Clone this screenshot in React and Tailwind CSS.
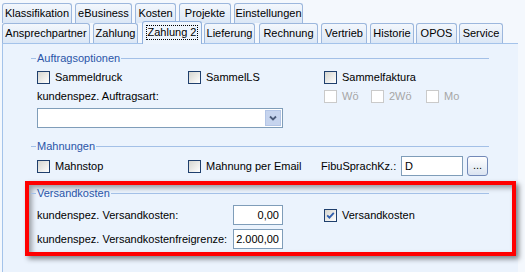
import React from 'react';

const row1 = [
  { label: 'Klassifikation', cls: 'w-[70px]' },
  { label: 'eBusiness', cls: 'w-[57px] ml-[3px]' },
  { label: 'Kosten', cls: 'w-[41px] ml-[3px]' },
  { label: 'Projekte', cls: 'w-[52px] ml-[3px]' },
  { label: 'Einstellungen', cls: 'w-[69px] ml-[3px]' },
];

const row2 = [
  { label: 'Ansprechpartner', cls: 'w-[88px]' },
  { label: 'Zahlung', cls: 'w-[45px] ml-[3px]' },
  { label: 'Zahlung 2', cls: 'w-[60px] ml-[4px]', selected: true },
  { label: 'Lieferung', cls: 'w-[51px] ml-[2px]' },
  { label: 'Rechnung', cls: 'w-[59px] ml-[4px]' },
  { label: 'Vertrieb', cls: 'w-[46px] ml-[3px]' },
  { label: 'Historie', cls: 'w-[44px] ml-[3px]' },
  { label: 'OPOS', cls: 'w-[41px] ml-[2px]' },
  { label: 'Service', cls: 'w-[44px] ml-[2px]' },
];

const Tab = ({ label, cls, selected }) => {
  if (selected) {
    return (
      <div className={`${cls} relative z-10 h-[23px] -mb-px flex items-start justify-center pt-[3px] border border-b-0 border-[#91b0db] rounded-t-[3px] bg-[#eef5fd]`}>
        <span className="border border-dotted border-black px-px leading-[13px]">{label}</span>
      </div>
    );
  }
  return (
    <div className={`${cls} h-[20px] flex items-center justify-center border border-b-0 border-[#9cb7dd] rounded-t-[3px] bg-linear-to-b from-[#f3f7fc] to-[#dbe7f6]`}>
      {label}
    </div>
  );
};

const Check = ({ checked, disabled }) => (
  <span
    className={`w-[13px] h-[13px] shrink-0 border flex items-center justify-center ${
      disabled ? 'border-[#cacaca] bg-white' : 'border-[#1f3f6d] bg-linear-to-br from-[#d5d5cf] to-white'
    }`}
  >
    {checked && (
      <svg width="9" height="9" viewBox="0 0 9 9">
        <polyline points="1.2,4.3 3.4,6.6 7.8,1.8" fill="none" stroke="#2f5eae" strokeWidth="1.8" />
      </svg>
    )}
  </span>
);

const CheckItem = ({ label, checked, disabled, cls = '' }) => (
  <div className={`flex items-center gap-[5px] ${cls}`}>
    <Check checked={checked} disabled={disabled} />
    <span className={disabled ? 'text-[#a6a6a6]' : ''}>{label}</span>
  </div>
);

const GroupHeader = ({ title, cls = '' }) => (
  <div className={`flex items-center w-[458px] h-[13px] ${cls}`}>
    <span className="w-[5px] h-px bg-[#a3c0e7]" />
    <span className="px-px text-[#2a55a8] leading-[13px]">{title}</span>
    <span className="flex-1 h-px bg-[#a3c0e7]" />
  </div>
);

const TextBox = ({ value, cls = '', right }) => (
  <div className={`h-[20px] border border-[#7f9db9] bg-white flex items-center px-[3px] ${right ? 'justify-end' : ''} ${cls}`}>
    {value}
  </div>
);

export default function App() {
  return (
    <div className="w-[525px] h-[272px] overflow-hidden bg-[#f4f8fd] text-[11px] text-black font-['Liberation_Sans',Arial,sans-serif] leading-none">
      <div className="flex pl-[2px] pt-[3px] h-[23px]">
        {row1.map((t) => (
          <Tab key={t.label} {...t} />
        ))}
      </div>
      <div className="flex items-end pl-[2px] h-[20px]">
        {row2.map((t) => (
          <Tab key={t.label} {...t} />
        ))}
      </div>

      <div className="ml-[2px] w-[516px] h-[229px] border-l border-t border-[#a4c3ea] bg-[#ebf3fd] flex flex-col">
        <GroupHeader title="Auftragsoptionen" cls="ml-[28px] mt-[8px]" />
        <div className="flex items-center h-[13px] mt-[6px] ml-[34px]">
          <CheckItem label="Sammeldruck" cls="w-[151px]" />
          <CheckItem label="SammelLS" cls="w-[136px]" />
          <CheckItem label="Sammelfaktura" />
        </div>
        <div className="flex items-center h-[13px] mt-[6px] ml-[34px]">
          <span className="w-[287px]">kundenspez. Auftragsart:</span>
          <CheckItem label="Wö" disabled cls="w-[47px]" />
          <CheckItem label="2Wö" disabled cls="w-[55px]" />
          <CheckItem label="Mo" disabled />
        </div>
        <div className="flex w-[246px] h-[20px] mt-[5px] ml-[34px] border border-[#7f9db9] bg-white">
          <div className="flex-1" />
          <div className="w-[16px] m-px border border-[#b3c5e6] bg-[#c6d4ee] flex items-center justify-center">
            <svg width="8" height="6" viewBox="0 0 8 6">
              <polyline points="1,1.5 4,4.5 7,1.5" fill="none" stroke="#4a5a78" strokeWidth="1.8" />
            </svg>
          </div>
        </div>

        <GroupHeader title="Mahnungen" cls="ml-[28px] mt-[12px]" />
        <div className="flex items-center h-[20px] mt-[3px] ml-[34px]">
          <CheckItem label="Mahnstop" cls="w-[151px]" />
          <CheckItem label="Mahnung per Email" cls="w-[133px]" />
          <span className="w-[80px]">FibuSprachKz.:</span>
          <TextBox value="D" cls="w-[62px]" />
          <div className="ml-[4px] w-[21px] h-[20px] rounded-[3px] border border-[#7289b8] bg-linear-to-b from-white to-[#dbe4f1] flex items-end justify-center pb-[4px]">
            ...
          </div>
        </div>

        <div className="mt-[5px] ml-[22px] w-[491px] h-[75px] border-4 border-[#ff0000] shadow-[3px_3px_5px_rgba(0,0,0,0.45),inset_3px_3px_5px_rgba(0,0,0,0.35)] flex flex-col">
          <GroupHeader title="Versandkosten" cls="ml-[2px] mt-[2px]" />
          <div className="flex items-center h-[20px] mt-[5px] ml-[8px]">
            <span className="w-[196px]">kundenspez. Versandkosten:</span>
            <TextBox value="0,00" right cls="w-[50px]" />
            <CheckItem label="Versandkosten" checked cls="ml-[41px]" />
          </div>
          <div className="flex items-center h-[20px] mt-[4px] ml-[8px]">
            <span className="w-[196px]">kundenspez. Versandkostenfreigrenze:</span>
            <TextBox value="2.000,00" right cls="w-[50px]" />
          </div>
        </div>
      </div>
    </div>
  );
}
